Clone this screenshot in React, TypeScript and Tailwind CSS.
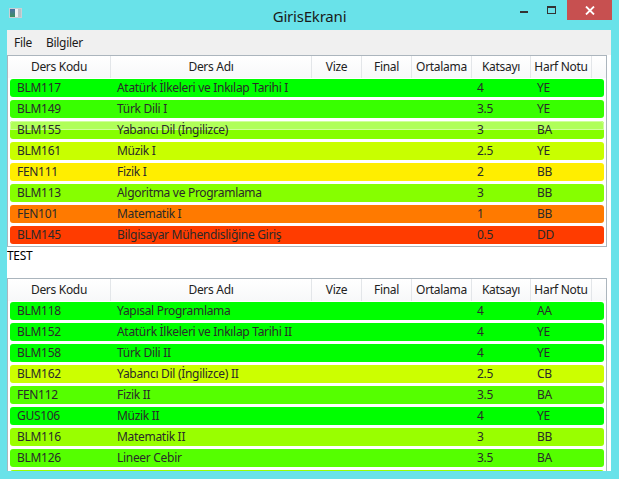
import React from "react";

type Row = { kod: string; ad: string; kat: string; harf: string; bg: string; hl?: boolean };

const list1: Row[] = [
  { kod: "BLM117", ad: "Atatürk İlkeleri ve Inkılap Tarihi I", kat: "4", harf: "YE", bg: "bg-[#00ff00]" },
  { kod: "BLM149", ad: "Türk Dili I", kat: "3.5", harf: "YE", bg: "bg-[#38ff00]" },
  { kod: "BLM155", ad: "Yabancı Dil (İngilizce)", kat: "3", harf: "BA", bg: "bg-[#86ff00]", hl: true },
  { kod: "BLM161", ad: "Müzik I", kat: "2.5", harf: "YE", bg: "bg-[#c8ff00]" },
  { kod: "FEN111", ad: "Fizik I", kat: "2", harf: "BB", bg: "bg-[#ffee00]" },
  { kod: "BLM113", ad: "Algoritma ve Programlama", kat: "3", harf: "BB", bg: "bg-[#86ff00]" },
  { kod: "FEN101", ad: "Matematik I", kat: "1", harf: "BB", bg: "bg-[#ff7a00]" },
  { kod: "BLM145", ad: "Bilgisayar Mühendisliğine Giriş", kat: "0.5", harf: "DD", bg: "bg-[#ff3c00]" },
];

const list2: Row[] = [
  { kod: "BLM118", ad: "Yapısal Programlama", kat: "4", harf: "AA", bg: "bg-[#00ff00]" },
  { kod: "BLM152", ad: "Atatürk İlkeleri ve Inkılap Tarihi II", kat: "4", harf: "YE", bg: "bg-[#00ff00]" },
  { kod: "BLM158", ad: "Türk Dili II", kat: "4", harf: "YE", bg: "bg-[#00ff00]" },
  { kod: "BLM162", ad: "Yabancı Dil (İngilizce) II", kat: "2.5", harf: "CB", bg: "bg-[#ccff00]" },
  { kod: "FEN112", ad: "Fizik II", kat: "3.5", harf: "BA", bg: "bg-[#55ff00]" },
  { kod: "GUS106", ad: "Müzik II", kat: "4", harf: "YE", bg: "bg-[#00ff00]" },
  { kod: "BLM116", ad: "Matematik II", kat: "3", harf: "BB", bg: "bg-[#99ff00]" },
  { kod: "BLM126", ad: "Lineer Cebir", kat: "3.5", harf: "BA", bg: "bg-[#55ff00]" },
  { kod: "BLM140", ad: "Olasılık ve İstatistik", kat: "3", harf: "BB", bg: "bg-[#99ff00]" },
];

const headers: { t: string; w: string }[] = [
  { t: "Ders Kodu", w: "w-[103px]" },
  { t: "Ders Adı", w: "w-[201px]" },
  { t: "Vize", w: "w-[50px]" },
  { t: "Final", w: "w-[50px]" },
  { t: "Ortalama", w: "w-[60px]" },
  { t: "Katsayı", w: "w-[59px]" },
  { t: "Harf Notu", w: "w-[61px]" },
];

function Header() {
  return (
    <div className="flex h-[22px] shrink-0 bg-gradient-to-b from-white to-[#f7f8f9]">
      {headers.map((h) => (
        <div
          key={h.t}
          className={`${h.w} shrink-0 flex items-center justify-center border-r border-[#e3e6e9] text-[#222]`}
        >
          {h.t}
        </div>
      ))}
      <div className="flex-1" />
    </div>
  );
}

function ListRow({ r }: { r: Row }) {
  return (
    <div className="h-[21px] pt-[1px] pb-[2px] px-[2px] shrink-0">
      <div className={`relative h-[18px] rounded-[3px] ${r.bg} flex items-center text-[#2a2a2a] overflow-hidden`}>
        {r.hl && (
          <div className="absolute inset-x-0 top-0 h-[9px] bg-white/35 border border-white/40 rounded-t-[3px]" />
        )}
        <div className="relative w-[101px] shrink-0 pl-[7px] whitespace-nowrap">{r.kod}</div>
        <div className="relative w-[201px] shrink-0 pl-[6px] whitespace-nowrap">{r.ad}</div>
        <div className="w-[50px] shrink-0" />
        <div className="w-[50px] shrink-0" />
        <div className="w-[60px] shrink-0" />
        <div className="relative w-[59px] shrink-0 pl-[5px]">{r.kat}</div>
        <div className="relative w-[61px] shrink-0 pl-[6px]">{r.harf}</div>
      </div>
    </div>
  );
}

function ListView({ rows, h }: { rows: Row[]; h: string }) {
  return (
    <div className={`w-[600px] ${h} shrink-0 border border-[#abb5bd] flex flex-col overflow-hidden bg-white`}>
      <Header />
      {rows.map((r) => (
        <ListRow key={r.kod} r={r} />
      ))}
    </div>
  );
}

export default function App() {
  return (
    <div
      className="w-[619px] h-[479px] bg-[#69e2e9] flex flex-col overflow-hidden text-[12px] tracking-[-0.3px]"
      style={{ fontFamily: "'Segoe UI', 'Noto Sans', 'Open Sans', sans-serif" }}
    >
      {/* title bar */}
      <div className="relative h-[30px] shrink-0 flex items-start">
        <div className="ml-[9px] mt-[8px] w-[13px] h-[10px] bg-white border border-[#c8d0d4] flex">
          <div className="w-[5px] h-full bg-gradient-to-b from-[#4a6fa5] to-[#3f8f5a]" />
          <div className="flex-1 bg-[#eef2f4]" />
          <div className="w-[3px] h-full bg-[#b8c2c8]" />
        </div>
        <div className="absolute left-0 right-0 top-[5px] text-center text-[15px] tracking-[-0.2px] text-[#1a1a1a]">
          GirisEkrani
        </div>
        <div className="ml-auto flex items-start">
          <div className="w-[28px] h-[20px] flex items-center justify-center">
            <div className="w-[8px] h-[2px] bg-[#333] mt-[4px]" />
          </div>
          <div className="w-[26px] h-[20px] flex items-center justify-center">
            <div className="w-[9px] h-[8px] border border-[#333] border-t-2" />
          </div>
          <div className="w-[45px] h-[20px] bg-[#c75050] flex items-center justify-center mr-[7px] ml-[3px]">
            <svg width="10" height="9" viewBox="0 0 10 9">
              <path d="M1 0.5 L9 8.5 M9 0.5 L1 8.5" stroke="white" strokeWidth="1.8" />
            </svg>
          </div>
        </div>
      </div>

      {/* client */}
      <div className="ml-[7px] mr-[8px] h-[441px] shrink-0 bg-white flex flex-col overflow-hidden">
        <div className="h-[25px] shrink-0 bg-[#f0f0f0] flex items-center text-[#1a1a1a]">
          <span className="px-[7px]">File</span>
          <span className="px-[7px]">Bilgiler</span>
        </div>
        <ListView rows={list1} h="h-[192px]" />
        <div className="h-[16px] leading-[16px] mt-[1px] shrink-0 text-black">TEST</div>
        <div className="h-[14px] shrink-0" />
        <ListView rows={list2} h="h-[240px]" />
      </div>
    </div>
  );
}
